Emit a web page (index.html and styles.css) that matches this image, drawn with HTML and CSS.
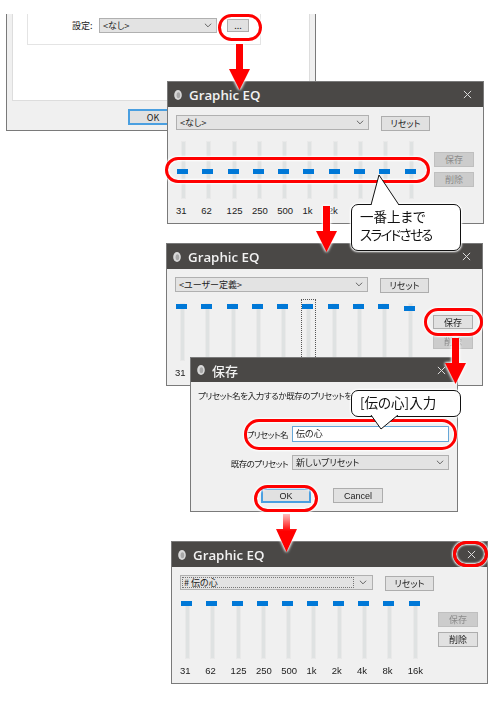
FILE: index.html
```html
<!DOCTYPE html>
<html lang="ja">
<head>
    <meta charset="UTF-8">
    <title>Graphic EQ</title>
    <link rel="stylesheet" href="styles.css">
</head>
<body>
    <div class="canvas">
        <!-- settings window, cut off at the top -->
        <div class="settings">
            <div class="settings-panel">
                <div class="group">
                    <span class="group-label">設定:</span>
                    <div class="combo group-combo"><span>&lt;なし&gt;</span><svg class="chev" viewBox="0 0 9 5"><path d="M1 .5l3.500 3.500 3.500-3.500"/></svg></div>
                    <div class="btn dots">...</div>
                </div>
            </div>
            <div class="settings-foot"><div class="btn btn-default settings-ok">OK</div></div>
        </div>

        <!-- flat sliders -->
        <div class="eq eq-one">
            <div class="titlebar">
                <svg class="app-icon" viewBox="0 0 8 10"><ellipse cx="4" cy="5" rx="3.800" ry="5" fill="#d8d8d8"/><ellipse cx="4.400" cy="5.200" rx="1.800" ry="3" fill="#a8a8a8"/></svg>
                <span class="title">Graphic EQ</span>
                <svg class="close" viewBox="0 0 10 10"><path d="M1 1l8 8M9 1l-8 8"/></svg>
            </div>
            <div class="eq-top">
                <div class="combo eq-combo"><span>&lt;なし&gt;</span><svg class="chev" viewBox="0 0 9 5"><path d="M1 .5l3.500 3.500 3.500-3.500"/></svg></div>
                <div class="btn reset">リセット</div>
            </div>
            <div class="eq-main">
                <div class="bands bands-flat">
                    <div class="band"><div class="slider"><i class="thumb"></i></div><span>31</span></div>
                    <div class="band"><div class="slider"><i class="thumb"></i></div><span>62</span></div>
                    <div class="band"><div class="slider"><i class="thumb"></i></div><span>125</span></div>
                    <div class="band"><div class="slider"><i class="thumb"></i></div><span>250</span></div>
                    <div class="band"><div class="slider"><i class="thumb"></i></div><span>500</span></div>
                    <div class="band"><div class="slider"><i class="thumb"></i></div><span>1k</span></div>
                    <div class="band"><div class="slider"><i class="thumb"></i></div><span>2k</span></div>
                    <div class="band"><div class="slider"><i class="thumb"></i></div><span>4k</span></div>
                    <div class="band"><div class="slider"><i class="thumb"></i></div><span>8k</span></div>
                    <div class="band"><div class="slider"><i class="thumb"></i></div><span>16k</span></div>
                </div>
                <div class="side">
                    <div class="btn btn-off">保存</div>
                    <div class="btn btn-off">削除</div>
                </div>
            </div>
        </div>

        <!-- sliders pushed to the top -->
        <div class="eq eq-two">
            <div class="titlebar">
                <svg class="app-icon" viewBox="0 0 8 10"><ellipse cx="4" cy="5" rx="3.800" ry="5" fill="#d8d8d8"/><ellipse cx="4.400" cy="5.200" rx="1.800" ry="3" fill="#a8a8a8"/></svg>
                <span class="title">Graphic EQ</span>
                <svg class="close" viewBox="0 0 10 10"><path d="M1 1l8 8M9 1l-8 8"/></svg>
            </div>
            <div class="eq-top">
                <div class="combo eq-combo"><span>&lt;ユーザー定義&gt;</span><svg class="chev" viewBox="0 0 9 5"><path d="M1 .5l3.500 3.500 3.500-3.500"/></svg></div>
                <div class="btn reset">リセット</div>
            </div>
            <div class="eq-main">
                <div class="bands">
                    <div class="band"><div class="slider"><i class="thumb"></i></div><span>31</span></div>
                    <div class="band"><div class="slider"><i class="thumb"></i></div><span>62</span></div>
                    <div class="band"><div class="slider"><i class="thumb"></i></div><span>125</span></div>
                    <div class="band"><div class="slider"><i class="thumb"></i></div><span>250</span></div>
                    <div class="band"><div class="slider"><i class="thumb"></i></div><span>500</span></div>
                    <div class="band band-focus"><div class="slider"><i class="thumb"></i></div><span>1k</span></div>
                    <div class="band"><div class="slider"><i class="thumb"></i></div><span>2k</span></div>
                    <div class="band"><div class="slider"><i class="thumb"></i></div><span>4k</span></div>
                    <div class="band"><div class="slider"><i class="thumb"></i></div><span>8k</span></div>
                    <div class="band band-low"><div class="slider"><i class="thumb"></i></div><span>16k</span></div>
                </div>
                <div class="side">
                    <div class="btn btn-save">保存</div>
                    <div class="btn btn-off">削除</div>
                </div>
            </div>
        </div>

        <!-- save dialog -->
        <div class="dialog">
            <div class="titlebar dialog-bar">
                <svg class="app-icon" viewBox="0 0 8 10"><ellipse cx="4" cy="5" rx="3.800" ry="5" fill="#d8d8d8"/><ellipse cx="4.400" cy="5.200" rx="1.800" ry="3" fill="#a8a8a8"/></svg>
                <span class="title">保存</span>
                <svg class="close" viewBox="0 0 10 10"><path d="M1 1l8 8M9 1l-8 8"/></svg>
            </div>
            <p class="dialog-msg">プリセット名を入力するか既存のプリセットを選択してください</p>
            <div class="dialog-form">
                <label>プリセット名</label>
                <div class="field">伝の心</div>
                <label>既存のプリセット</label>
                <div class="combo"><span>新しいプリセット</span><svg class="chev" viewBox="0 0 9 5"><path d="M1 .5l3.500 3.500 3.500-3.500"/></svg></div>
            </div>
            <div class="dialog-btns">
                <div class="btn btn-default">OK</div>
                <div class="btn">Cancel</div>
            </div>
        </div>

        <!-- saved preset -->
        <div class="eq eq-three">
            <div class="titlebar">
                <svg class="app-icon" viewBox="0 0 8 10"><ellipse cx="4" cy="5" rx="3.800" ry="5" fill="#d8d8d8"/><ellipse cx="4.400" cy="5.200" rx="1.800" ry="3" fill="#a8a8a8"/></svg>
                <span class="title">Graphic EQ</span>
                <svg class="close" viewBox="0 0 10 10"><path d="M1 1l8 8M9 1l-8 8"/></svg>
            </div>
            <div class="eq-top">
                <div class="combo eq-combo combo-focus"><span class="combo-text"># 伝の心</span><svg class="chev" viewBox="0 0 9 5"><path d="M1 .5l3.500 3.500 3.500-3.500"/></svg></div>
                <div class="btn reset">リセット</div>
            </div>
            <div class="eq-main">
                <div class="bands bands-top">
                    <div class="band"><div class="slider"><i class="thumb"></i></div><span>31</span></div>
                    <div class="band"><div class="slider"><i class="thumb"></i></div><span>62</span></div>
                    <div class="band"><div class="slider"><i class="thumb"></i></div><span>125</span></div>
                    <div class="band"><div class="slider"><i class="thumb"></i></div><span>250</span></div>
                    <div class="band"><div class="slider"><i class="thumb"></i></div><span>500</span></div>
                    <div class="band"><div class="slider"><i class="thumb"></i></div><span>1k</span></div>
                    <div class="band"><div class="slider"><i class="thumb"></i></div><span>2k</span></div>
                    <div class="band"><div class="slider"><i class="thumb"></i></div><span>4k</span></div>
                    <div class="band"><div class="slider"><i class="thumb"></i></div><span>8k</span></div>
                    <div class="band"><div class="slider"><i class="thumb"></i></div><span>16k</span></div>
                </div>
                <div class="side">
                    <div class="btn btn-off">保存</div>
                    <div class="btn">削除</div>
                </div>
            </div>
        </div>

        <!-- annotations -->
        <div class="ring ring-dots"></div>
        <div class="ring ring-sliders"></div>
        <div class="ring ring-save"></div>
        <div class="ring ring-name"></div>
        <div class="ring ring-ok"></div>
        <div class="ring ring-close"></div>

        <svg class="arrow arrow-1" viewBox="0 0 21 46"><polygon points="7,0 14,0 14,25 21,25 10.500,46 0,25 7,25"/></svg>
        <svg class="arrow arrow-2" viewBox="0 0 21 46"><polygon points="7,0 14,0 14,25 21,25 10.500,46 0,25 7,25"/></svg>
        <svg class="arrow arrow-3" viewBox="0 0 21 46"><polygon points="7,0 14,0 14,25 21,25 10.500,46 0,25 7,25"/></svg>
        <svg class="arrow arrow-4" viewBox="0 0 21 38">
            <defs><linearGradient id="fade" x1="0" y1="0" x2="0" y2="1"><stop offset="0" stop-color="#f00" stop-opacity=".25"/><stop offset=".45" stop-color="#f00"/></linearGradient></defs>
            <polygon fill="url(#fade)" points="7,0 14,0 14,15 21,15 10.500,38 0,15 7,15"/>
        </svg>

        <div class="callout callout-slide">一番上まで<br><span class="callout-narrow">スライドさせる</span>
            <svg class="tail" viewBox="0 0 29 32"><path d="M1 31L9 1l20 30" /></svg>
        </div>
        <div class="callout callout-name">[伝の心]入力
            <svg class="tail" viewBox="0 0 29 15"><path d="M1 0l10 14L28 0"/></svg>
        </div>
    </div>
</body>
</html>
```

FILE: styles.css
```css
* {
    box-sizing: border-box;
}
body {
    margin: 0;
    background-color: white;
    font-family: "Noto Sans CJK JP", "Liberation Sans", sans-serif;
    font-feature-settings: "palt";
    font-size: 9px;
    color: #222;
}
.canvas {
    position: relative;
    width: 500px;
    height: 702px;
    overflow: hidden;
    filter: blur(0.35px);
}

/* controls */
.btn {
    display: flex;
    align-items: center;
    justify-content: center;
    height: 15px;
    background-color: #e1e1e1;
    border: 1px solid #adadad;
}
.btn-off {
    color: #8a8a8a;
    background-color: #ccc;
    border-color: #bfbfbf;
}
.btn-default {
    border: 2px solid #4a9fe0;
}
.combo {
    display: flex;
    align-items: center;
    justify-content: space-between;
    height: 15px;
    padding: 0 4px 0 3px;
    background-color: #e3e3e3;
    border: 1px solid #b0b0b0;
}
.chev {
    width: 8px;
    height: 5px;
    flex: none;
    fill: none;
    stroke: #555;
}
.combo-focus {
    padding: 1px 5px 1px 1px;
}
.combo-text {
    flex: 1;
    height: 100%;
    margin-right: 5px;
    padding-left: 2px;
    line-height: 11px;
    outline: 1px dotted #777;
    outline-offset: -1px;
}

/* first window */
.settings {
    position: absolute;
    left: 6px;
    top: 14px;
    width: 310px;
    height: 117px;
    background-color: #f0f0f0;
    border: 1px solid #7a7a7a;
    border-top: 0;
    padding: 0 5px;
}
.settings-panel {
    height: 87px;
    background-color: white;
    border: 1px solid #ddd;
    border-top: 0;
    padding: 0 14px;
}
.group {
    display: flex;
    align-items: center;
    width: 234px;
    height: 31px;
    padding: 5px 0 12px 44px;
    border: 1px solid #e4e4e4;
    border-top: 0;
}
.group-label {
    width: 27px;
}
.group-combo {
    width: 118px;
}
.dots {
    width: 22px;
    height: 13px;
    margin-left: 10px;
}
.settings-foot {
    padding: 8px 0 0 116px;
}
.settings-ok {
    width: 50px;
    height: 16px;
}

/* equalizer windows */
.eq, .dialog {
    position: absolute;
    background-color: #f0f0f0;
    border: 1px solid #7a7a7a;
}
.eq {
    width: 317px;
    height: 143px;
}
.eq-one {
    left: 167px;
    top: 81px;
}
.eq-two {
    left: 166px;
    top: 243px;
}
.eq-three {
    left: 171px;
    top: 541px;
}
.titlebar {
    display: flex;
    align-items: center;
    height: 25px;
    padding: 0 11px 0 6px;
    background-color: #4a4846;
    color: #f2f2f2;
}
.app-icon {
    width: 8px;
    height: 10px;
    margin-right: 7px;
}
.title {
    flex: 1;
    font-family: "Open Sans", sans-serif;
    font-weight: 600;
    font-size: 13.300px;
}
.close {
    width: 9px;
    height: 9px;
    fill: none;
    stroke: #ddd;
    stroke-width: 1.100;
}
.eq-top {
    display: flex;
    padding: 8px 0 0 8px;
}
.eq-combo {
    width: 193px;
}
.reset {
    width: 49px;
    margin: 1px 0 0 12px;
}
.eq-main {
    display: flex;
    padding: 10px 0 0 8px;
}
.bands {
    display: flex;
    width: 253px;
}
.band {
    flex: 1;
    font-family: "Liberation Sans", sans-serif;
    font-size: 9.500px;
}
.slider {
    position: relative;
    width: 13px;
    height: 58px;
    margin-bottom: 6px;
}
.slider::before {
    content: "";
    position: absolute;
    left: 5px;
    top: 0;
    bottom: 0;
    width: 3px;
    background-color: #dfe2e2;
    border: 1px solid #e9e9e9;
}
.thumb {
    position: absolute;
    left: 1px;
    top: 0;
    width: 11px;
    height: 4.500px;
    background-color: #0078d7;
}
.bands-flat .thumb {
    top: 28px;
}
.eq-two .thumb {
    top: 1px;
}
.eq-two .band-low .thumb {
    top: 3px;
}
.band-focus .slider::after {
    content: "";
    position: absolute;
    left: 0;
    top: -4px;
    right: -2px;
    bottom: 0;
    border: 1px dotted #555;
}
.side {
    display: flex;
    flex-direction: column;
    gap: 5px;
    width: 40px;
    margin: 11px 0 0 5px;
}
.btn-save {
    margin-top: 1px;
    height: 14px;
}

/* save dialog */
.dialog {
    left: 190px;
    top: 357px;
    width: 268px;
    height: 155px;
}
.dialog-bar {
    height: 24px;
}
.dialog-bar .title {
    font-family: "Noto Sans CJK JP", sans-serif;
    font-size: 13px;
    font-weight: 500;
}
.dialog-msg {
    margin: 7px 0 0 7px;
    font-size: 8.500px;
    letter-spacing: -0.4px;
    white-space: nowrap;
    overflow: hidden;
}
.dialog-form {
    display: grid;
    grid-template-columns: 97px 157px;
    align-items: center;
    column-gap: 4px;
    row-gap: 13px;
    margin-top: 25px;
    padding-right: 8px;
}
.dialog-form label {
    text-align: right;
    font-size: 8.500px;
    letter-spacing: -0.5px;
}
.field {
    height: 16px;
    padding: 0 3px;
    line-height: 14px;
    background-color: white;
    border: 1px solid #66a7d8;
}
.dialog-btns {
    display: flex;
    gap: 22px;
    padding: 18px 0 0 70px;
}
.dialog-btns .btn {
    width: 50px;
    font-family: "Liberation Sans", sans-serif;
}

/* red annotations */
.ring {
    position: absolute;
    border: 3px solid #f00;
    border-radius: 14px;
    box-shadow: 0 0 2px 1px white, inset 0 0 2px 1px white;
}
.ring-dots {
    left: 218px;
    top: 14px;
    width: 44px;
    height: 27px;
}
.ring-sliders {
    left: 165px;
    top: 157px;
    width: 265px;
    height: 26px;
}
.ring-save {
    left: 424px;
    top: 308px;
    width: 59px;
    height: 28px;
}
.ring-name {
    left: 244px;
    top: 419px;
    width: 213px;
    height: 31px;
    border-radius: 15px;
}
.ring-ok {
    left: 254px;
    top: 485px;
    width: 64px;
    height: 27px;
}
.ring-close {
    left: 453px;
    top: 541px;
    width: 35px;
    height: 26px;
    border-width: 3px;
}
.arrow {
    position: absolute;
    width: 21px;
    height: 46px;
    fill: #f00;
    filter: drop-shadow(0 0 1.500px white) drop-shadow(0 0 1px white);
}
.arrow-1 {
    left: 229px;
    top: 44px;
}
.arrow-2 {
    left: 316px;
    top: 206px;
}
.arrow-3 {
    left: 445px;
    top: 338px;
}
.arrow-4 {
    left: 276px;
    top: 514px;
    height: 38px;
}
.callout {
    position: absolute;
    left: 351px;
    width: 110px;
    padding: 2px 8px;
    background-color: white;
    border: 1px solid #111;
    border-radius: 7px;
    font-size: 13.500px;
    line-height: 18px;
    color: #111;
    box-shadow: 0 0 2px 1px white;
}
.callout-narrow {
    letter-spacing: -1.700px;
}
.callout-slide {
    top: 204px;
    height: 47px;
}
.callout-name {
    top: 390px;
    height: 27px;
}
.tail {
    position: absolute;
    left: 18px;
    width: 29px;
    fill: white;
    stroke: #111;
    stroke-width: 1;
}
.callout-slide .tail {
    top: -31px;
    height: 32px;
}
.callout-name .tail {
    top: 24px;
    height: 15px;
}
```
